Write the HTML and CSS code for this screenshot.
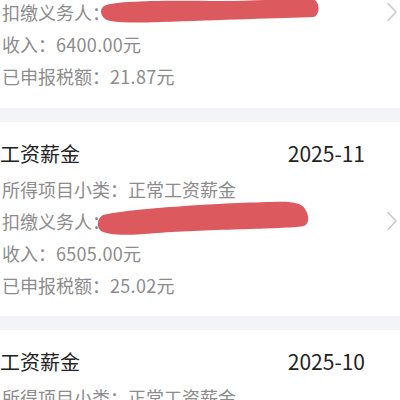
FILE: index.html
```html
<!DOCTYPE html>
<html lang="zh-CN">
<head>
<meta charset="utf-8">
<link rel="stylesheet" href="styles.css">
</head>
<body>
<div class="list">
  <section class="card card-partial">
    <div class="row row-agent">
      <span>扣缴义务人：</span>
      <svg class="redact redact-top" width="222" height="28" viewBox="0 0 222 28"><path d="M4,10 C10,5 60,4 120,5 C160,5 190,2 215,4 C220,8 220,18 214,21 C180,22 120,24 60,26 C30,27 8,27 4,22 C0,18 0,13 4,10 Z"/></svg>
      <svg class="chev" width="12" height="20" viewBox="0 0 12 20"><path d="M2,1.5 L10,10 L2,18.5"/></svg>
    </div>
    <div class="row">收入：<span class="num">6400.00</span>元</div>
    <div class="row">已申报税额：<span class="num">21.87</span>元</div>
  </section>

  <section class="card">
    <div class="head"><span class="title">工资薪金</span><span class="date">2025-11</span></div>
    <div class="row">所得项目小类：正常工资薪金</div>
    <div class="row row-agent">
      <span>扣缴义务人：</span>
      <svg class="redact redact-mid" width="216" height="36" viewBox="0 0 216 36"><path d="M6,14 C30,8 120,2 175,1 C195,0 205,2 208,8 C212,14 213,22 207,25 C195,28 110,28 60,32 C30,35 10,34 4,30 C-1,26 0,17 6,14 Z"/></svg>
      <svg class="chev" width="12" height="20" viewBox="0 0 12 20"><path d="M2,1.5 L10,10 L2,18.5"/></svg>
    </div>
    <div class="row">收入：<span class="num">6505.00</span>元</div>
    <div class="row">已申报税额：<span class="num">25.02</span>元</div>
  </section>

  <section class="card">
    <div class="head"><span class="title">工资薪金</span><span class="date">2025-10</span></div>
    <div class="row">所得项目小类：正常工资薪金</div>
  </section>
</div>
</body>
</html>
```
FILE: styles.css
```css
html, body {
  margin: 0;
  padding: 0;
  background: #f3f4f8;
  font-family: "Noto Sans CJK SC", "Noto Sans", sans-serif;
  overflow: hidden;
}
.list {
  display: flex;
  flex-direction: column;
  gap: 14px;
  width: 400px;
}
.card {
  background: #ffffff;
  padding: 15px 2px 15px 0;
}
.card-partial {
  margin-top: -4px;
  padding-top: 0;
  padding-bottom: 16px;
}
.head {
  display: flex;
  justify-content: space-between;
  align-items: center;
  height: 32px;
  margin-bottom: 4px;
}
.title {
  font-size: 20px;
  color: #222222;
}
.date {
  font-size: 21px;
  color: #222222;
  margin-right: 33px;
}
.row {
  position: relative;
  display: flex;
  align-items: center;
  height: 32px;
  padding-left: 2px;
  font-size: 18px;
  color: #8c8c8c;
  white-space: nowrap;
}
.num {
  letter-spacing: 0.3px;
}
.row-agent {
  justify-content: space-between;
}
.redact {
  position: absolute;
  fill: #dc5a5e;
  overflow: visible;
}
.redact-top {
  left: 100px;
  top: 0;
}
.redact-mid {
  left: 97px;
  top: -4px;
}
.chev {
  fill: none;
  stroke: #c8c8c8;
  stroke-width: 1.5;
  stroke-linecap: round;
  stroke-linejoin: round;
}
```
